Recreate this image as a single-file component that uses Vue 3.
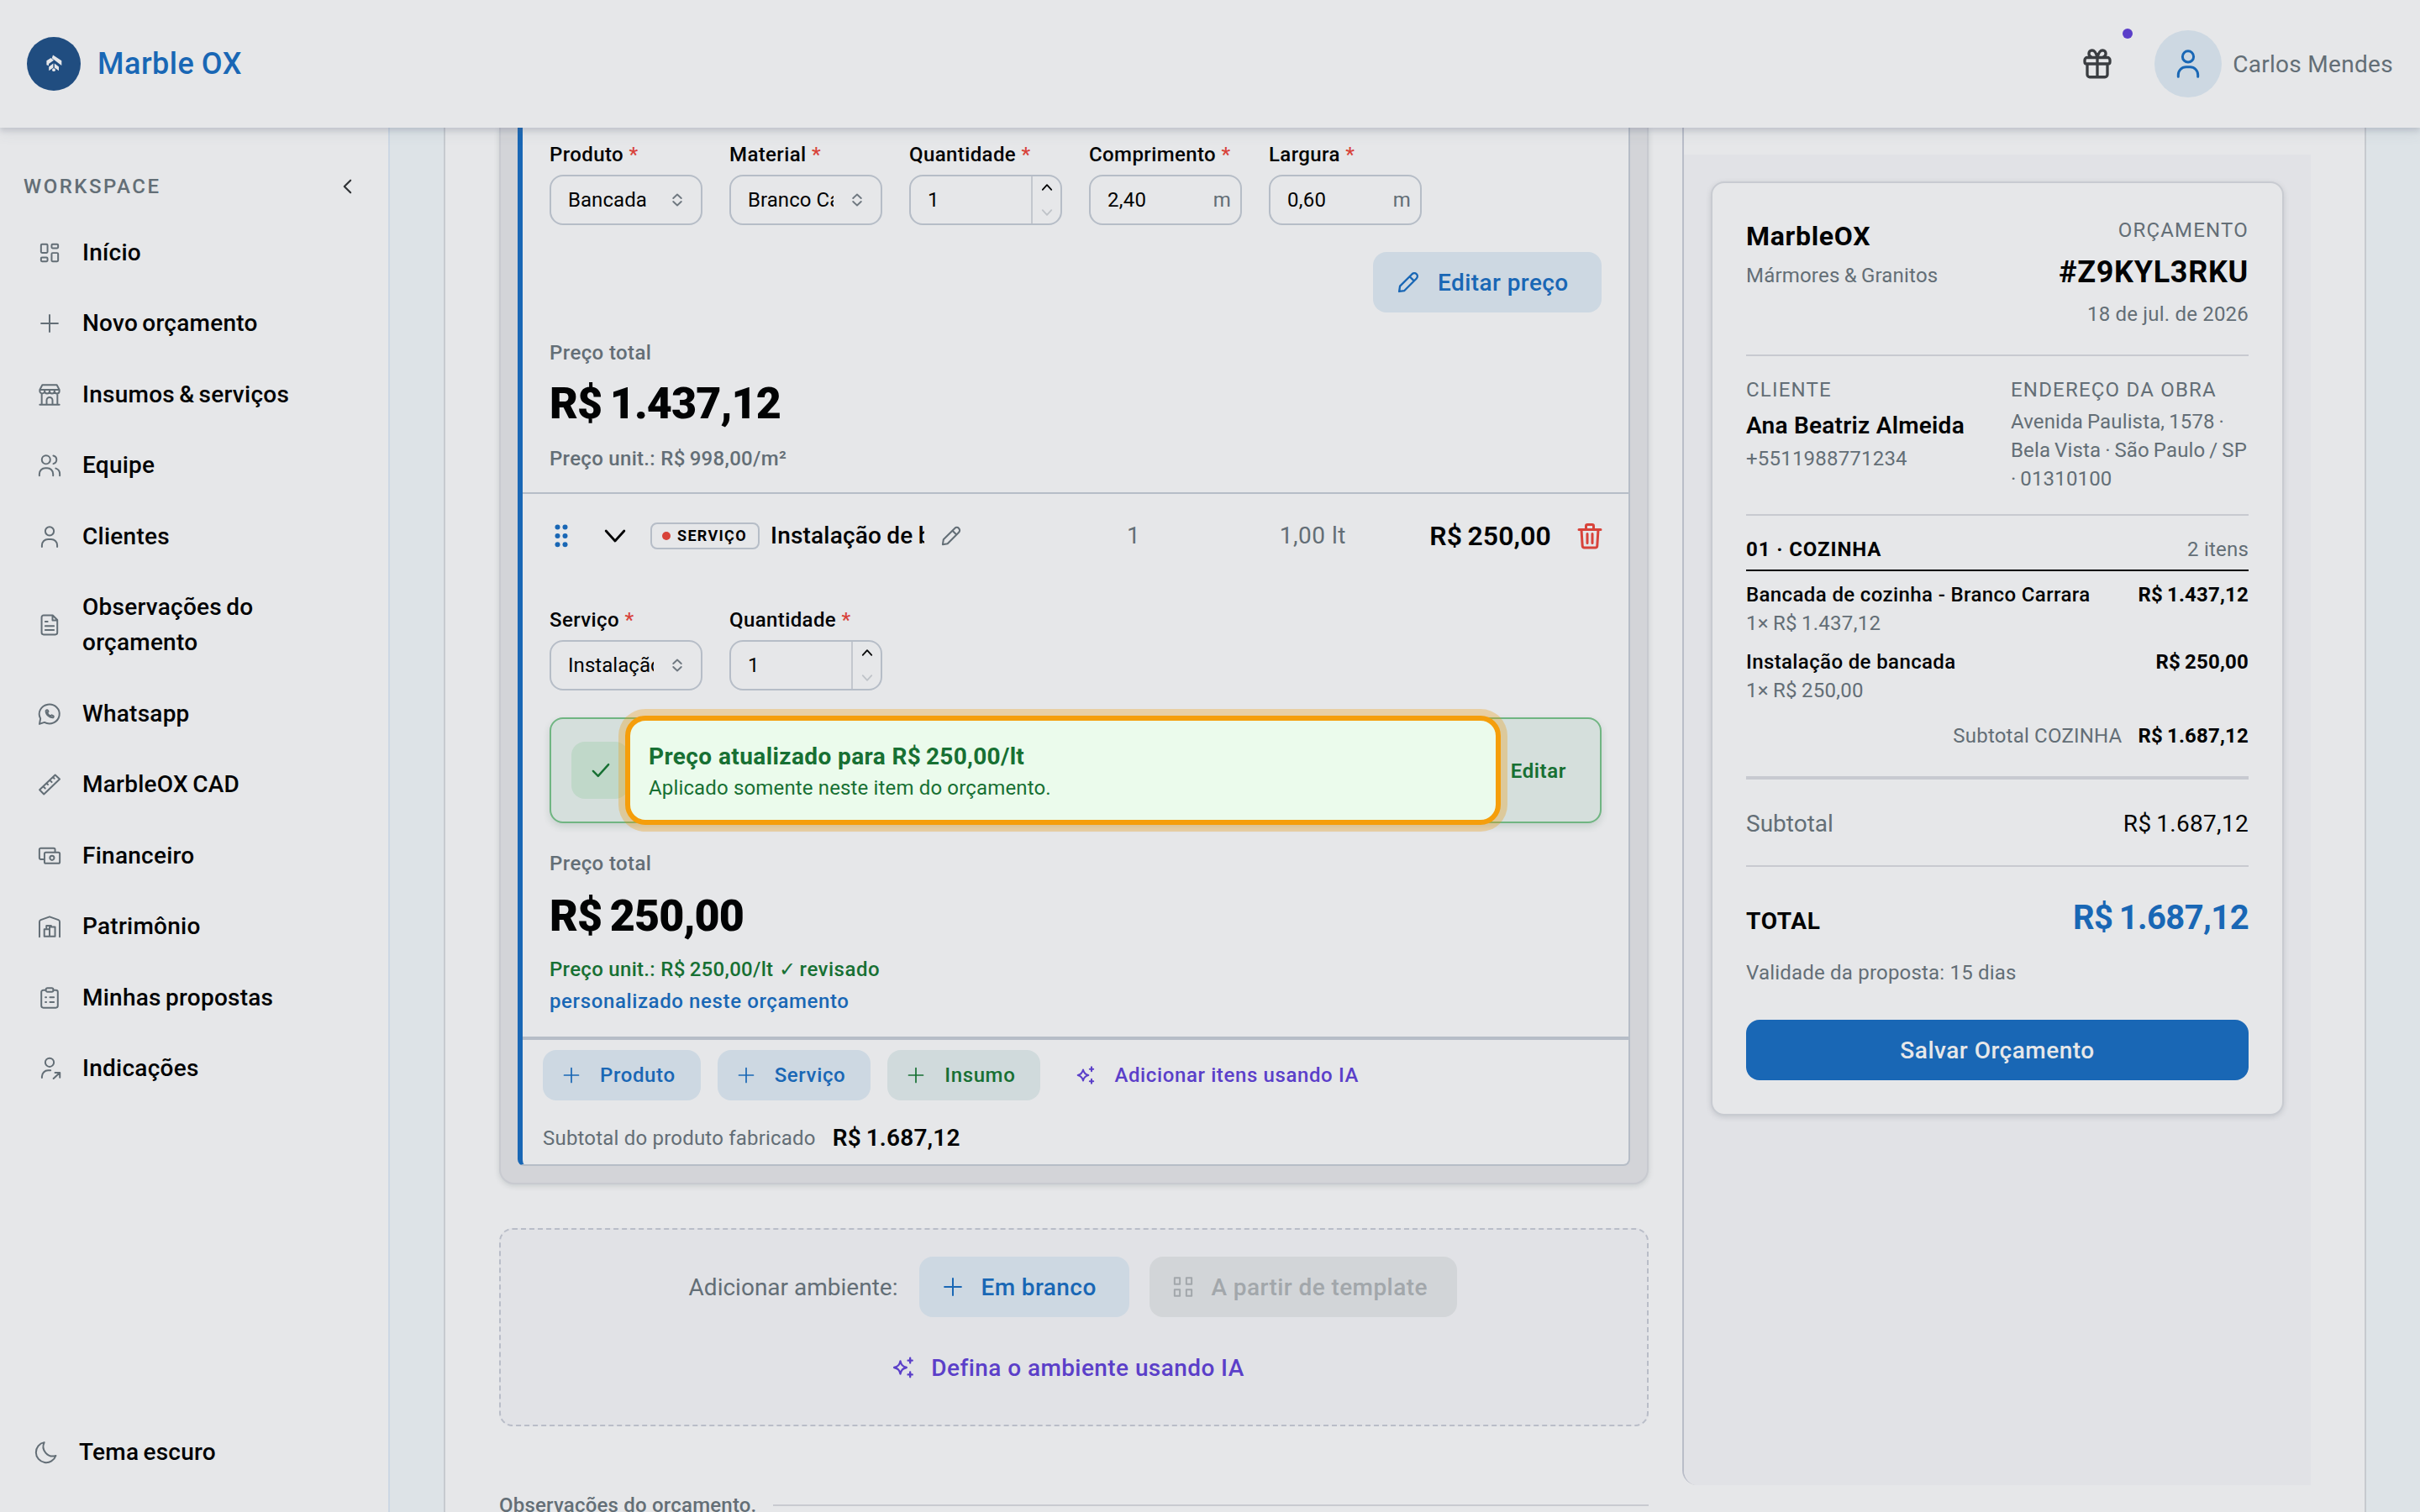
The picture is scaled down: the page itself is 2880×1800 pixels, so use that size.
<template>
  <div class="app">
    <header class="topbar">
      <div class="brand">
        <div class="brand-logo">
          <svg viewBox="0 0 64 64">
            <path d="M31 21.5L41.3 28.3V34L37 30.8 29.8 25.2zM23.4 28.2L28.6 25l3.4 2.8-6 4.2v2.2l-2.6-1zM26.2 35.6l5.2-4v5l-5.2 3.6zM32.8 31.6l5.2 4v4.6l-5.2-3.6z" />
            <circle cx="32" cy="39.2" r="1.9" />
          </svg>
        </div>
        <span class="brand-name">Marble OX</span>
      </div>
      <div class="topbar-right">
        <button class="gift" type="button" title="Novidades">
          <svg viewBox="0 0 24 24"><path :d="icons.gift" /></svg>
          <span class="gift-dot"></span>
        </button>
        <div class="avatar">
          <svg viewBox="0 0 24 24"><path :d="icons.user" /></svg>
        </div>
        <span class="user-name">Carlos Mendes</span>
      </div>
    </header>

    <div class="body">
      <aside class="sidebar">
        <div class="sidebar-head">
          <span>WORKSPACE</span>
          <svg viewBox="0 0 24 24"><path d="M16.5 4L8.5 12l8 8" /></svg>
        </div>
        <nav>
          <a v-for="item in menu" :key="item.label" class="nav-item">
            <svg viewBox="0 0 24 24"><path :d="icons[item.icon]" /></svg>
            <span>{{ item.label }}</span>
          </a>
        </nav>
        <a class="nav-item theme-toggle">
          <svg viewBox="0 0 24 24"><path :d="icons.moon" /></svg>
          <span>Tema escuro</span>
        </a>
      </aside>

      <main class="page">
        <div class="sheet">
          <section class="editor">
            <div class="room">
              <div class="room-inner">
                <div class="item first">
                  <div class="fields">
                    <div v-for="field in productFields" :key="field.label" class="field">
                      <label>{{ field.label }} <i>*</i></label>
                      <div class="input" :class="field.type">
                        <span class="value">{{ field.value }}</span>
                        <svg v-if="field.type === 'select'" class="sel" viewBox="0 0 24 24"><path :d="icons.updown" /></svg>
                        <span v-if="field.type === 'measure'" class="unit">m</span>
                        <div v-if="field.type === 'stepper'" class="steps">
                          <svg viewBox="0 0 24 24"><path d="M3 17l9-10 9 10" /></svg>
                          <svg class="off" viewBox="0 0 24 24"><path d="M3 7l9 10 9-10" /></svg>
                        </div>
                      </div>
                    </div>
                  </div>
                  <div class="edit-row">
                    <button type="button" class="btn btn-blue edit-price">
                      <svg viewBox="0 0 24 24"><path :d="icons.pencil" /></svg>
                      <span>Editar preço</span>
                    </button>
                  </div>
                  <div class="price-label">Preço total</div>
                  <div class="price money">R$ 1.437,12</div>
                  <div class="price-unit">Preço unit.: <span class="money">R$ 998,00/m²</span></div>
                </div>

                <div class="item second">
                  <div class="item-head">
                    <svg class="grip" viewBox="0 0 16 28">
                      <circle v-for="n in 6" :key="n" :cx="n % 2 ? 3.5 : 12.5" :cy="3.5 + Math.floor((n - 1) / 2) * 10.4" r="3" />
                    </svg>
                    <svg class="chev" viewBox="0 0 24 24"><path d="M2 6.5l10 11 10-11" /></svg>
                    <span class="tag"><b></b>SERVIÇO</span>
                    <span class="item-name">Instalação de bancada</span>
                    <svg class="pen" viewBox="0 0 24 24"><path :d="icons.pencil" /></svg>
                    <span class="col-qty">1</span>
                    <span class="col-measure">1,00 lt</span>
                    <span class="col-price money">R$ 250,00</span>
                    <svg class="trash" viewBox="0 0 28 32"><path :d="icons.trash" /></svg>
                  </div>
                  <div class="fields">
                    <div v-for="field in serviceFields" :key="field.label" class="field">
                      <label>{{ field.label }} <i>*</i></label>
                      <div class="input" :class="field.type">
                        <span class="value">{{ field.value }}</span>
                        <svg v-if="field.type === 'select'" class="sel" viewBox="0 0 24 24"><path :d="icons.updown" /></svg>
                        <div v-if="field.type === 'stepper'" class="steps">
                          <svg viewBox="0 0 24 24"><path d="M3 17l9-10 9 10" /></svg>
                          <svg class="off" viewBox="0 0 24 24"><path d="M3 7l9 10 9-10" /></svg>
                        </div>
                      </div>
                    </div>
                  </div>
                  <div class="alert">
                    <div class="alert-icon">
                      <svg viewBox="0 0 24 24"><path d="M2 13l6.5 6.5L22 4.5" /></svg>
                    </div>
                    <span class="alert-action">Editar</span>
                    <div class="spotlight">
                      <strong>Preço atualizado para <span class="money">R$ 250,00/lt</span></strong>
                      <p>Aplicado somente neste item do orçamento.</p>
                    </div>
                  </div>
                  <div class="price-label">Preço total</div>
                  <div class="price money">R$ 250,00</div>
                  <div class="price-unit reviewed">Preço unit.: <span class="money">R$ 250,00/lt</span> <span class="check">✓ revisado</span></div>
                  <div class="price-unit custom">personalizado neste orçamento</div>
                </div>

                <div class="item-actions">
                  <button v-for="action in addActions" :key="action.label" type="button" class="btn btn-sm" :class="action.style">
                    <svg viewBox="0 0 24 24"><path :d="icons[action.icon]" /></svg>
                    <span>{{ action.label }}</span>
                  </button>
                </div>
                <div class="item-subtotal">
                  <span>Subtotal do produto fabricado</span>
                  <strong class="money">R$ 1.687,12</strong>
                </div>
              </div>
            </div>

            <div class="add-room">
              <div class="add-room-row">
                <span class="add-room-label">Adicionar ambiente:</span>
                <button type="button" class="btn btn-blue btn-blank">
                  <svg viewBox="0 0 24 24"><path :d="icons.plus" /></svg>
                  <span>Em branco</span>
                </button>
                <button type="button" class="btn btn-disabled">
                  <svg viewBox="0 0 24 24"><path :d="icons.grid" /></svg>
                  <span>A partir de template</span>
                </button>
              </div>
              <button type="button" class="btn btn-ai">
                <svg viewBox="0 0 24 24"><path :d="icons.sparkles" /></svg>
                <span>Defina o ambiente usando IA</span>
              </button>
            </div>

            <div class="notes-title"><span>Observações do orçamento.</span></div>
          </section>

          <aside class="preview">
            <div class="preview-bg">
              <div class="quote">
                <div class="quote-head">
                  <div>
                    <div class="company">MarbleOX</div>
                    <div class="muted company-sub">Mármores &amp; Granitos</div>
                  </div>
                  <div class="right">
                    <div class="muted caps">ORÇAMENTO</div>
                    <div class="code">#Z9KYL3RKU</div>
                    <div class="muted date">18 de jul. de 2026</div>
                  </div>
                </div>
                <div class="quote-client">
                  <div>
                    <div class="muted caps">CLIENTE</div>
                    <div class="client-name">Ana Beatriz Almeida</div>
                    <div class="muted">+5511988771234</div>
                  </div>
                  <div>
                    <div class="muted caps">ENDEREÇO DA OBRA</div>
                    <div class="muted address">Avenida Paulista, 1578 · Bela Vista · São Paulo / SP · 01310100</div>
                  </div>
                </div>
                <div class="section-head">
                  <strong>01 · COZINHA</strong>
                  <span class="muted">2 itens</span>
                </div>
                <div v-for="line in lines" :key="line.name" class="line">
                  <div>
                    <div class="line-name">{{ line.name }}</div>
                    <div class="muted money">{{ line.detail }}</div>
                  </div>
                  <strong class="money">{{ line.price }}</strong>
                </div>
                <div class="section-total">
                  <span class="muted">Subtotal COZINHA</span>
                  <strong class="money">R$ 1.687,12</strong>
                </div>
                <div class="subtotal">
                  <span>Subtotal</span>
                  <b class="money">R$ 1.687,12</b>
                </div>
                <div class="total">
                  <strong>TOTAL</strong>
                  <b class="money">R$ 1.687,12</b>
                </div>
                <div class="muted validity">Validade da proposta: 15 dias</div>
                <button type="button" class="save">Salvar Orçamento</button>
              </div>
            </div>
          </aside>
        </div>
      </main>
    </div>
  </div>
</template>

<script setup>
// All icons are drawn on a 24x24 grid, except trash (28x32)
const icons = {
  dashboard: 'M4.3 3.3h4.6a1 1 0 0 1 1 1v6.6a1 1 0 0 1-1 1H4.3a1 1 0 0 1-1-1V4.3a1 1 0 0 1 1-1zM15.1 3.3h4.6a1 1 0 0 1 1 1v2a1 1 0 0 1-1 1h-4.6a1 1 0 0 1-1-1v-2a1 1 0 0 1 1-1zM4.3 16.7h4.6a1 1 0 0 1 1 1v2a1 1 0 0 1-1 1H4.3a1 1 0 0 1-1-1v-2a1 1 0 0 1 1-1zM15.1 12.1h4.6a1 1 0 0 1 1 1v6.6a1 1 0 0 1-1 1h-4.6a1 1 0 0 1-1-1v-6.6a1 1 0 0 1 1-1z',
  plus: 'M12 3.5v17M3.5 12h17',
  store: 'M2 22h20M4 22V10.6M20 22V10.6M2 6.8L4.6 2h14.8L22 6.8M2 6.8h20M2 6.8v1.4a2.5 2.5 0 0 0 5 0 2.5 2.5 0 0 0 5 0 2.5 2.5 0 0 0 5 0 2.5 2.5 0 0 0 5 0V6.8M9 22v-4.5a3 3 0 0 1 6 0V22',
  team: 'M12.7 6.3a4.3 4.3 0 1 1-8.6 0 4.3 4.3 0 0 1 8.6 0zM15.8 2.2a4.2 4.2 0 0 1 0 8.2M1.6 22.4v-1.6a6 6 0 0 1 6-6h2a6 6 0 0 1 6 6v1.6M18.3 15.1a6 6 0 0 1 4.1 5.7v1.6',
  user: 'M16.4 6.3a4.4 4.4 0 1 1-8.8 0 4.4 4.4 0 0 1 8.8 0zM4.2 22.2v-1.5a6.2 6.2 0 0 1 6.2-6.2h3.2a6.2 6.2 0 0 1 6.2 6.2v1.5',
  file: 'M5.9 2.2h9.3l4.7 4.7v12.9a2 2 0 0 1-2 2h-12a2 2 0 0 1-2-2V4.2a2 2 0 0 1 2-2zM15 2.4v4.8h4.8M7.6 8.6h2.4M7.6 13h8.8M7.6 17.2h8.8',
  whatsapp: 'M1.7 22.2l1-5.6a10.3 9.8 0 1 1 4 3.9zM8.6 8.2a1 1 0 0 1 1.6.1l.5 1.3-1.1 1.3M8.3 8.5c-.5 3.8 3.4 7.5 7.4 7M9.6 10.9c.7 1.5 1.8 2.5 3.3 3.2l1.3-1 1.4.7a1 1 0 0 1 .1 1.7',
  ruler: 'M1.8 17.4L17.7 2.2l4.6 4.3L6.2 21.8zM5.5 14l2 1.9M8.9 10.7l1.4 1.3M12.2 7.6l2 1.9M15.4 4.5l1.4 1.3',
  money: 'M5.4 15.4H3a1.4 1.4 0 0 1-1.4-1.4V5.4A1.4 1.4 0 0 1 3 4h13.2a1.4 1.4 0 0 1 1.4 1.4v2.8M8.2 8.4h12.8a1.4 1.4 0 0 1 1.4 1.4v8.4a1.4 1.4 0 0 1-1.4 1.4H8.2a1.4 1.4 0 0 1-1.4-1.4V9.8a1.4 1.4 0 0 1 1.4-1.4zM16.7 14a2.2 2.2 0 1 1-4.4 0 2.2 2.2 0 0 1 4.4 0z',
  warehouse: 'M1.7 22.4V7.2a2 2 0 0 1 1.3-1.9L12 2l9 3.3a2 2 0 0 1 1.3 1.9v15.2M6.6 22V14.8h5.4V22M12 22v-9.5h5.6V22M6.6 22h11M8.8 14.6v-3.4h4.8v1.2',
  clipboard: 'M8.4 4H5.6a2 2 0 0 0-2 2v14a2 2 0 0 0 2 2h12.8a2 2 0 0 0 2-2V6a2 2 0 0 0-2-2h-2.8M9.8 1.9h4.4a1.6 1.6 0 0 1 1.6 1.6v.6a1.6 1.6 0 0 1-1.6 1.6H9.8a1.6 1.6 0 0 1-1.6-1.6v-.6a1.6 1.6 0 0 1 1.6-1.6zM7.8 11.4h.8M12.4 11.4h4M7.8 16.3h.8M12.4 16.3h4',
  share: 'M16.4 5.8a4.4 4.4 0 1 1-8.8 0 4.4 4.4 0 0 1 8.8 0zM4.2 21.5v-1.3a6.2 6.2 0 0 1 6.2-6.2h2.6M16 22.3l6.4-6M17.6 16.2h4.9v5',
  moon: 'M10 1.8A10.4 10.4 0 1 0 21.8 15.4 9.8 9.8 0 0 1 10 1.8z',
  gift: 'M4 7h16a2 2 0 0 1 2 2v1.5a1.5 1.5 0 0 1-1.5 1.5h-17A1.5 1.5 0 0 1 2 10.5V9a2 2 0 0 1 2-2zM4 12v8.5a2 2 0 0 0 2 2h12a2 2 0 0 0 2-2V12M12 7v15.5M12 7C11 3 9.5 1.2 7.8 1.2A2.7 2.7 0 0 0 7.3 6.5M12 7c1-4 2.5-5.8 4.2-5.8a2.7 2.7 0 0 1 .5 5.3',
  pencil: 'M15.9 3.6a3.1 3.1 0 0 1 4.5 4.5L8 20.6 2.7 21.4 3.5 16zM13.4 6.2l4.4 4.4',
  updown: 'M2.5 8L12 -1l9.5 9M2.5 16l9.5 9 9.5-9',
  trash: 'M1 8.5h26M9.5 8V4.2A1.7 1.7 0 0 1 11.2 2.5h5.6a1.7 1.7 0 0 1 1.7 1.7V8M4 8.5l1.2 19.2a2.4 2.4 0 0 0 2.4 2.3h12.8a2.4 2.4 0 0 0 2.4-2.3L24 8.5M11 13.5v11M17 13.5v11',
  grid: 'M3.3 2.8h5.4v6.4H3.3zM15.3 2.8h5.4v6.4h-5.4zM3.3 14.8h5.4v6.4H3.3zM15.3 14.8h5.4v6.4h-5.4z',
  sparkles: 'M9 5.5c.9 4 2.3 5.6 6.3 6.5-4 .9-5.4 2.5-6.3 6.5-.9-4-2.3-5.6-6.3-6.5 4-.9 5.4-2.5 6.3-6.5zM19 2.3v5M16.8 4.8h4.4M19 16.7v5M16.8 19.2h4.4',
};

const menu = [
  { icon: 'dashboard', label: 'Início' },
  { icon: 'plus', label: 'Novo orçamento' },
  { icon: 'store', label: 'Insumos & serviços' },
  { icon: 'team', label: 'Equipe' },
  { icon: 'user', label: 'Clientes' },
  { icon: 'file', label: 'Observações do orçamento' },
  { icon: 'whatsapp', label: 'Whatsapp' },
  { icon: 'ruler', label: 'MarbleOX CAD' },
  { icon: 'money', label: 'Financeiro' },
  { icon: 'warehouse', label: 'Patrimônio' },
  { icon: 'clipboard', label: 'Minhas propostas' },
  { icon: 'share', label: 'Indicações' },
];

const productFields = [
  { label: 'Produto', value: 'Bancada', type: 'select' },
  { label: 'Material', value: 'Branco Carrara', type: 'select' },
  { label: 'Quantidade', value: '1', type: 'stepper' },
  { label: 'Comprimento', value: '2,40', type: 'measure' },
  { label: 'Largura', value: '0,60', type: 'measure' },
];

const serviceFields = [
  { label: 'Serviço', value: 'Instalação', type: 'select' },
  { label: 'Quantidade', value: '1', type: 'stepper' },
];

const addActions = [
  { label: 'Produto', icon: 'plus', style: 'btn-blue' },
  { label: 'Serviço', icon: 'plus', style: 'btn-blue' },
  { label: 'Insumo', icon: 'plus', style: 'btn-green' },
  { label: 'Adicionar itens usando IA', icon: 'sparkles', style: 'btn-ai' },
];

const lines = [
  { name: 'Bancada de cozinha - Branco Carrara', detail: '1× R$ 1.437,12', price: 'R$ 1.437,12' },
  { name: 'Instalação de bancada', detail: '1× R$ 250,00', price: 'R$ 250,00' },
];
</script>

<style>
body {
  margin: 0;
  overflow: hidden;
  background: #dde3e7;
}
</style>

<style scoped>
* {
  box-sizing: border-box;
}

.app {
  width: 2880px;
  height: 1800px;
  overflow: hidden;
  display: flex;
  flex-direction: column;
  font-family: Roboto, sans-serif;
  font-size: 24px;
  line-height: 36px;
  letter-spacing: 0.2px;
  color: #020304;
  background: #dde3e7;
}

svg {
  display: block;
  flex: none;
  overflow: visible;
  fill: none;
  stroke: currentColor;
  stroke-width: 1.7;
  stroke-linecap: round;
  stroke-linejoin: round;
}

button {
  font: inherit;
  letter-spacing: inherit;
  border: none;
  background: none;
  padding: 0;
  color: inherit;
}

/* Tighter gap between currency sign and amount */
.money {
  letter-spacing: 0.3px;
  word-spacing: -0.05em;
}

/* Header */
.topbar {
  position: relative;
  z-index: 2;
  flex: none;
  height: 152px;
  padding: 0 32px;
  display: flex;
  align-items: center;
  justify-content: space-between;
  background: #e6e7e9;
  box-shadow: 0 4px 6px rgba(90, 95, 120, 0.2), 0 8px 16px rgba(90, 95, 120, 0.07);
}

.brand {
  display: flex;
  align-items: center;
  gap: 20px;
}

.brand-logo {
  width: 64px;
  height: 64px;
  border-radius: 50%;
  background: #204d80;
  color: #e6e7e9;
}

.brand-logo svg {
  fill: currentColor;
  stroke: none;
}

.brand-name {
  font-size: 36px;
  font-weight: 500;
  letter-spacing: 0.5px;
  word-spacing: -1px;
  color: #1967b5;
}

.topbar-right {
  display: flex;
  align-items: center;
}

.gift {
  position: relative;
  margin-right: 50px;
  color: #3a3d41;
}

.gift svg {
  width: 36px;
  height: 36px;
  stroke-width: 2.2;
}

.gift-dot {
  position: absolute;
  left: 48px;
  top: -24px;
  width: 12px;
  height: 12px;
  border-radius: 50%;
  background: #5b3fc9;
}

.avatar {
  width: 80px;
  height: 80px;
  border-radius: 50%;
  background: #cdd8e2;
  color: #1967b5;
  display: flex;
  align-items: center;
  justify-content: center;
  margin-right: 13px;
}

.avatar svg {
  width: 36px;
  height: 36px;
  stroke-width: 2;
}

.user-name {
  padding-top: 2px;
  font-size: 28px;
  letter-spacing: 0.3px;
  color: #636e76;
}

.body {
  flex: 1;
  min-height: 0;
  display: flex;
}

/* Sidebar */
.sidebar {
  width: 464px;
  flex: none;
  background: #e6e7e9;
  border-right: 2px solid #ccd7e4;
  display: flex;
  flex-direction: column;
}

.sidebar-head {
  display: flex;
  align-items: center;
  justify-content: space-between;
  padding: 52px 38px 0 28px;
  height: 88px;
  font-weight: 500;
  letter-spacing: 2.5px;
  color: #636e76;
}

.sidebar-head svg {
  width: 22px;
  height: 22px;
  color: #303336;
  stroke-width: 2.4;
}

nav {
  padding-top: 18px;
}

.nav-item {
  display: flex;
  align-items: center;
  gap: 25px;
  padding: 21.7px 50px 20.8px 45px;
  font-size: 28px;
  font-weight: 500;
  line-height: 42px;
  letter-spacing: 0.25px;
  word-spacing: -2px;
}

.nav-item svg {
  width: 28px;
  height: 28px;
  color: #636e76;
}

.theme-toggle {
  margin-top: auto;
  margin-bottom: 29px;
  padding-left: 41px;
}

/* Budget editor */
.page {
  flex: 1;
  padding: 0 64px;
}

.sheet {
  height: 100%;
  display: flex;
  background: #e6e7e9;
  border-left: 2px solid #c6cacf;
  border-right: 2px solid #c6cacf;
}

.editor {
  width: 1368px;
  margin-left: 64px;
  margin-right: 40px;
}

.room {
  border: 2px solid #c8cad0;
  border-top: none;
  border-radius: 0 0 18px 18px;
  background: #d3d4d8;
  padding: 0 20px 20px;
  box-shadow: 0 2px 6px rgba(80, 100, 100, 0.2);
}

.room-inner {
  background: #e6e7e9;
  border: 2px solid #b6bdc7;
  border-left: 6px solid #1967b5;
  border-top: none;
  border-radius: 0 0 8px 8px;
}

.item {
  padding: 0 32px;
}

.item.first {
  padding-top: 14px;
  height: 434px;
}

.item.second {
  border-top: 2px solid #b6bdc7;
  height: 648px;
}

.fields {
  display: flex;
  gap: 32px;
}

.field {
  width: 182px;
}

.field label {
  display: block;
  font-weight: 500;
  letter-spacing: 0.4px;
  white-space: nowrap;
  margin-bottom: 6px;
}

.field i {
  font-style: normal;
  color: #d8433a;
}

.input {
  height: 60px;
  border: 2px solid #b6bdc7;
  border-radius: 16px;
  padding-left: 20px;
  display: flex;
  align-items: center;
  letter-spacing: 0.3px;
}

.value {
  flex: 1;
  white-space: nowrap;
  overflow: hidden;
}

.select .value {
  flex: none;
  width: 102px;
  letter-spacing: 0.05px;
}

.sel {
  width: 12px;
  height: 18px;
  margin-left: 22px;
  color: #6f7880;
  stroke-width: 3.8;
}

.unit {
  padding-right: 11px;
  color: #636e76;
}

.steps {
  width: 35px;
  height: 56px;
  border-left: 2px solid #c3c7ce;
  display: flex;
  flex-direction: column;
  align-items: center;
  justify-content: space-between;
  padding: 6px 0;
}

.steps svg {
  width: 14px;
  height: 14px;
  stroke-width: 3;
}

.steps .off {
  color: #bfc3c8;
}

.edit-row {
  display: flex;
  justify-content: flex-end;
  margin-top: 32px;
}

/* Buttons */
.btn {
  height: 72px;
  border-radius: 16px;
  padding: 0 40px 0 26px;
  display: flex;
  align-items: center;
  gap: 19px;
  font-size: 28px;
  font-weight: 500;
  letter-spacing: 0.42px;
  white-space: nowrap;
}

.btn svg {
  width: 28px;
  height: 28px;
}

.btn span {
  padding-top: 1px;
}

.btn-blue {
  background: #cdd8e2;
  color: #1967b5;
}

.btn-green {
  background: #d0dadc;
  color: #177033;
}

.btn-ai {
  color: #5b3fc9;
}

.btn-ai svg {
  stroke-width: 2;
}

.btn-blank {
  width: 250px;
}

.btn-disabled {
  width: 366px;
  background: #d2d5d8;
  color: #a2a7ab;
}

.edit-price {
  width: 272px;
  padding: 0 0 0 28px;
  gap: 21px;
}

.edit-price svg {
  stroke-width: 2;
}

.btn-sm {
  height: 60px;
  padding: 0 30px 0 22px;
  gap: 22px;
  font-size: 24px;
  letter-spacing: 0.62px;
}

.btn-sm svg {
  width: 24px;
  height: 24px;
}

.btn-sm span {
  padding-top: 0;
}

.price-label {
  margin-top: 30px;
  font-weight: 500;
  letter-spacing: 0.4px;
  color: #636e76;
}

.price {
  margin-top: 13px;
  font-size: 52px;
  font-weight: 900;
  line-height: 60px;
  letter-spacing: -0.9px;
}

.price-unit {
  margin-top: 17px;
  font-weight: 500;
  letter-spacing: 0.3px;
  color: #636e76;
}

/* Item row */
.item-head {
  height: 100px;
  display: flex;
  align-items: center;
  margin-bottom: 32px;
  font-size: 28px;
}

.grip {
  width: 16px;
  height: 28px;
  margin-left: 6px;
  fill: #1967b5;
  stroke: none;
}

.chev {
  width: 26px;
  height: 26px;
  margin-left: 43px;
  stroke-width: 2.6;
}

.tag {
  margin-left: 29px;
  width: 130px;
  height: 32px;
  flex: none;
  border: 2px solid #b6bdc7;
  border-radius: 8px;
  display: flex;
  align-items: center;
  padding-left: 12px;
  gap: 8px;
  font-size: 18px;
  font-weight: 700;
  letter-spacing: 1.3px;
}

.tag b {
  width: 10px;
  height: 10px;
  border-radius: 50%;
  background: #d8433a;
}

.item-name {
  margin-left: 13px;
  width: 183px;
  overflow: hidden;
  white-space: nowrap;
  font-weight: 500;
  letter-spacing: 0.2px;
  word-spacing: -1px;
}

.pen {
  width: 26px;
  height: 26px;
  margin-left: 19px;
  color: #636e76;
  stroke-width: 1.9;
}

.col-qty {
  width: 212px;
  text-align: right;
  color: #636e76;
}

.col-measure {
  width: 245px;
  text-align: right;
  letter-spacing: 0.5px;
  color: #636e76;
}

.col-price {
  width: 244px;
  text-align: right;
  font-size: 32px;
  font-weight: 600;
  letter-spacing: 0.1px;
}

.trash {
  margin-left: auto;
  width: 28px;
  height: 32px;
  color: #d8433a;
  stroke-width: 3;
}

/* Price confirmation */
.alert {
  position: relative;
  margin-top: 32px;
  height: 126px;
  border: 2px solid #70b582;
  border-radius: 16px;
  background: #d5dfdc;
  display: flex;
  align-items: center;
  justify-content: space-between;
  padding: 0 40px 0 24px;
  color: #177033;
  box-shadow: 0 4px 8px rgba(40, 90, 60, 0.16);
}

.alert-icon {
  width: 68px;
  height: 68px;
  border-radius: 16px;
  background: #c0d8c9;
  padding-left: 24px;
  display: flex;
  align-items: center;
}

.alert-icon svg {
  width: 22px;
  height: 22px;
  stroke-width: 2.6;
}

.alert-action {
  padding-top: 1px;
  font-weight: 600;
  letter-spacing: 0.6px;
}

.spotlight {
  position: absolute;
  left: 88px;
  top: -4px;
  width: 1042px;
  height: 130px;
  border: 6px solid #f59e0b;
  border-radius: 24px;
  background: #ebfbec;
  box-shadow: 0 0 0 8px rgba(240, 152, 8, 0.3);
  padding: 24px 22px;
}

.spotlight strong {
  display: block;
  font-size: 28px;
  font-weight: 700;
  line-height: 38px;
  letter-spacing: 0.4px;
}

.spotlight p {
  margin: 0;
  letter-spacing: 0.15px;
}

.second .price {
  margin-top: 15px;
}

.reviewed {
  margin-top: 15px;
  color: #177033;
}

.check {
  letter-spacing: 0.5px;
  word-spacing: -2px;
}

.custom {
  margin-top: 2px;
  letter-spacing: 0.62px;
  color: #1967b5;
}

.item-actions {
  border-top: 4px solid #b6bdc7;
  padding: 12px 24px 0;
  display: flex;
  gap: 20px;
}

.item-subtotal {
  padding: 0 24px;
  margin-top: 24px;
  height: 52px;
  line-height: 42px;
  display: flex;
  gap: 20px;
  color: #636e76;
}

.item-subtotal strong {
  font-size: 28px;
  font-weight: 600;
  letter-spacing: 0.2px;
  color: #020304;
}

/* New room */
.add-room {
  margin-top: 52px;
  height: 236px;
  border: 2px dashed #b9bdc8;
  border-radius: 16px;
  background: #e1e2e6;
  padding-top: 32px;
  display: flex;
  flex-direction: column;
  align-items: center;
  gap: 24px;
}

.add-room-row {
  display: flex;
  align-items: center;
  gap: 24px;
}

.add-room-label {
  padding-top: 1px;
  margin: 0 2px 0 -2px;
  font-size: 28px;
  letter-spacing: 0;
  color: #636e76;
}

.notes-title {
  margin-top: 76px;
  display: flex;
  align-items: center;
  gap: 20px;
  font-weight: 500;
  color: #636e76;
}

.notes-title::after {
  content: "";
  flex: 1;
  height: 2px;
  background: #c8cad0;
}

/* Quote preview */
.preview {
  width: 748px;
  height: 1616px;
  padding-top: 32px;
  border-left: 2px solid #b9bdc8;
  border-bottom-left-radius: 18px;
  overflow: hidden;
}

.preview-bg {
  height: 1584px;
  background: #e1e2e6;
  padding: 32px;
}

.quote {
  height: 1112px;
  border: 2px solid #c8cbd1;
  border-radius: 16px;
  background: #e6e7e9;
  padding: 0 40px;
  box-shadow: 0 2px 6px rgba(80, 90, 100, 0.2);
}

.muted {
  color: #636e76;
  line-height: 34px;
}

.caps {
  letter-spacing: 1.2px;
}

.quote strong {
  font-weight: 700;
}

.quote-head {
  display: flex;
  justify-content: space-between;
  height: 206px;
  padding-top: 39px;
  border-bottom: 2px solid #c8cad0;
}

.right {
  text-align: right;
}

.company {
  font-size: 32px;
  font-weight: 700;
  line-height: 40px;
  letter-spacing: 0.7px;
  padding-top: 4px;
}

.company-sub {
  margin-top: 10px;
  word-spacing: -1px;
}

.code {
  font-size: 36px;
  font-weight: 700;
  line-height: 44px;
  letter-spacing: 0.7px;
  margin-top: 11px;
}

.date {
  margin-top: 11px;
}

.quote-client {
  display: grid;
  grid-template-columns: 283px 290px;
  column-gap: 32px;
  height: 190px;
  padding-top: 23px;
  border-bottom: 2px solid #c8cad0;
}

.client-name {
  font-size: 28px;
  font-weight: 600;
  line-height: 42px;
  letter-spacing: 0.25px;
  margin: 5px 0 1px;
}

.address {
  margin-top: 4px;
  letter-spacing: 0.15px;
  word-spacing: -1.2px;
}

.section-head {
  display: flex;
  justify-content: space-between;
  height: 66px;
  padding-top: 23px;
  border-bottom: 2px solid #020304;
  margin-bottom: 11px;
  line-height: 34px;
}

.section-head strong {
  letter-spacing: 0.9px;
}

.line {
  display: flex;
  justify-content: space-between;
  height: 80px;
  line-height: 34px;
}

.line-name {
  font-weight: 500;
  letter-spacing: 0.38px;
}

.section-total {
  display: flex;
  justify-content: flex-end;
  gap: 19px;
  height: 73px;
  padding-top: 8px;
  line-height: 34px;
}

.line > strong,
.section-total strong {
  letter-spacing: 0.2px;
}

.subtotal {
  display: flex;
  justify-content: space-between;
  align-items: center;
  border-top: 4px solid #c8cad0;
  border-bottom: 2px solid #c8cad0;
  height: 108px;
  padding-top: 3px;
  font-size: 28px;
  letter-spacing: 0;
  color: #636e76;
}

.subtotal b {
  font-weight: 400;
  color: #020304;
}

.total {
  display: flex;
  justify-content: space-between;
  align-items: baseline;
  padding-top: 35px;
  height: 100px;
  font-size: 28px;
  line-height: 52px;
}

.total strong {
  letter-spacing: 0.7px;
}

.total b {
  font-size: 40px;
  font-weight: 700;
  letter-spacing: -0.6px;
  color: #1967b5;
}

.validity {
  margin-top: 9px;
}

.save {
  display: block;
  width: 100%;
  height: 72px;
  margin-top: 39px;
  padding-top: 2px;
  border-radius: 16px;
  background: #1967b5;
  color: #e6e7e9;
  font-size: 28px;
  font-weight: 500;
  letter-spacing: 0.5px;
}
</style>
